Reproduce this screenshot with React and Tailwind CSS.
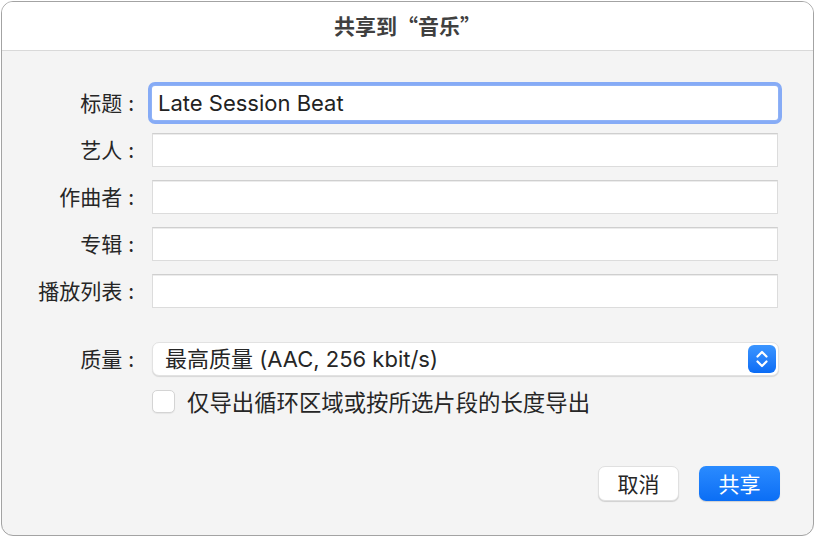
import React from 'react';

const cjk = "font-['Noto_Sans_CJK_SC',sans-serif]";
const latin = "font-['Inter','Noto_Sans_CJK_SC',sans-serif]";

const Stepper = () => (
  <div className="w-[28px] h-[28px] rounded-[6px] bg-gradient-to-b from-[#3b95ff] to-[#0a6cf5] flex items-center justify-center">
    <svg width="14" height="20" viewBox="0 0 14 20" fill="none">
      <path d="M2.5 7.5 L7 3 L11.5 7.5" stroke="white" strokeWidth="2.2" strokeLinecap="round" strokeLinejoin="round" />
      <path d="M2.5 12.5 L7 17 L11.5 12.5" stroke="white" strokeWidth="2.2" strokeLinecap="round" strokeLinejoin="round" />
    </svg>
  </div>
);

const Label = ({ text }) => (
  <div className={`w-[134px] text-right text-[21px] text-[#262626] pr-[2px] ${cjk}`}>
    {text}
    <span className="ml-[6px]">:</span>
  </div>
);

const Field = ({ label, value, focused }) => (
  <div className="flex items-center">
    <Label text={label} />
    <div className="ml-[16px]">
      {focused ? (
        <div className="w-[626px] h-[34px] rounded-[3px] bg-white shadow-[0_0_0_1px_#8fb2f6,0_0_0_4px_#86abf6] flex items-center pl-[6px]">
          <span className={`text-[22px] text-[#222] ${latin}`}>{value}</span>
        </div>
      ) : (
        <div className="w-[626px] h-[34px] bg-white border border-[#dcdcdc] border-t-[#cfcfcf] shadow-[inset_0_1px_0_#ececec]" />
      )}
    </div>
  </div>
);

export default function App() {
  return (
    <div className="w-[817px] h-[537px] bg-white p-[1px]">
      <div className="w-[813px] h-[535px] rounded-[12px] border border-[#a3a3a3] bg-[#f4f4f4] overflow-hidden flex flex-col">
        {/* Title bar */}
        <div className="h-[49px] bg-white border-b border-[#d9d9d9] flex items-center justify-center">
          <span className={`text-[21px] font-bold text-[#404040] ${cjk}`}>共享到“音乐”</span>
        </div>

        {/* Form */}
        <div className="flex flex-col pt-[35px]">
          <div className="flex flex-col gap-[13px]">
            <Field label="标题" value="Late Session Beat" focused />
            <Field label="艺人" />
            <Field label="作曲者" />
            <Field label="专辑" />
            <Field label="播放列表" />
          </div>

          <div className="flex items-center mt-[34px]">
            <Label text="质量" />
            <div className="ml-[16px] w-[627px] h-[34px] rounded-[7px] bg-white border border-[#e2e2e2] shadow-[0_1px_1px_rgba(0,0,0,0.12)] flex items-center justify-between pl-[12px] pr-[2px]">
              <span className={`text-[22px] text-[#262626] ${latin}`}>最高质量 (AAC, 256 kbit/s)</span>
              <Stepper />
            </div>
          </div>

          <div className="flex items-center h-[23px] mt-[14px] ml-[150px]">
            <div className="w-[23px] h-[23px] rounded-[5px] bg-white border border-[#d4d4d4] shadow-[0_1px_1px_rgba(0,0,0,0.06)]" />
            <span className={`ml-[12px] text-[22.4px] leading-[23px] text-[#262626] ${cjk}`}>仅导出循环区域或按所选片段的长度导出</span>
          </div>

          {/* Buttons */}
          <div className="flex justify-end gap-[20px] mt-[53px] pr-[33px]">
            <button className={`w-[81px] h-[35px] rounded-[7px] bg-white border border-[#e0e0e0] shadow-[0_1px_1px_rgba(0,0,0,0.15)] text-[21px] text-[#262626] ${cjk}`}>取消</button>
            <button className={`w-[81px] h-[35px] rounded-[7px] bg-gradient-to-b from-[#2a8bff] to-[#0a6ef5] shadow-[0_1px_1px_rgba(0,0,0,0.15)] text-[21px] text-white ${cjk}`}>共享</button>
          </div>
        </div>
      </div>
    </div>
  );
}
